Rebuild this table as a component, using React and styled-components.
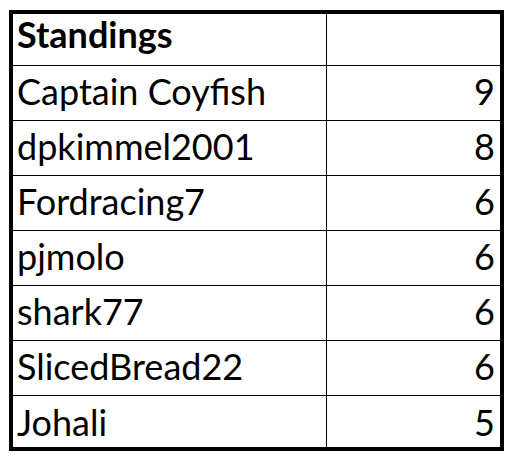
import React from "react";
import styled, { createGlobalStyle } from "styled-components";

const players = [
  { name: "Captain Coyfish", points: 9 },
  { name: "dpkimmel2001", points: 8 },
  { name: "Fordracing7", points: 6 },
  { name: "pjmolo", points: 6 },
  { name: "shark77", points: 6 },
  { name: "SlicedBread22", points: 6 },
  { name: "Johali", points: 5 },
];

const GlobalStyle = createGlobalStyle`
  html, body {
    margin: 0;
    background: #fff;
  }
  body {
    padding: 10px 0 0 9px;
    font-family: Lato, "Liberation Sans", sans-serif;
    color: #000;
  }
`;

const Sheet = styled.div`
  box-sizing: border-box;
  width: 495px;
  height: 441px;
  border: 4px solid #000;
  display: grid;
  grid-template-columns: 314px 173px;
  grid-template-rows: 52px repeat(6, 55px) 51px;
`;

const Cell = styled.div`
  box-sizing: border-box;
  border-bottom: ${(p) => (p.$last ? "none" : "1px solid #000")};
  border-right: ${(p) => (p.$first ? "1px solid #000" : "none")};
  display: flex;
  align-items: flex-end;
  justify-content: ${(p) => (p.$num ? "flex-end" : "flex-start")};
  padding: 0 5px ${(p) => p.$pb}px 4px;
  font-size: 36px;
  font-weight: ${(p) => (p.$bold ? 700 : 400)};
  line-height: 1;
  white-space: nowrap;
`;

export default function App() {
  return (
    <>
      <GlobalStyle />
      <Sheet>
        <Cell $first $bold $pb={13}>
          Standings
        </Cell>
        <Cell $pb={13} />
        {players.map((p, i) => {
          const last = i === players.length - 1;
          const pb = last ? 7 : 11;
          return (
            <React.Fragment key={p.name}>
              <Cell $first $last={last} $pb={pb}>
                {p.name}
              </Cell>
              <Cell $num $last={last} $pb={pb}>
                {p.points}
              </Cell>
            </React.Fragment>
          );
        })}
      </Sheet>
    </>
  );
}
